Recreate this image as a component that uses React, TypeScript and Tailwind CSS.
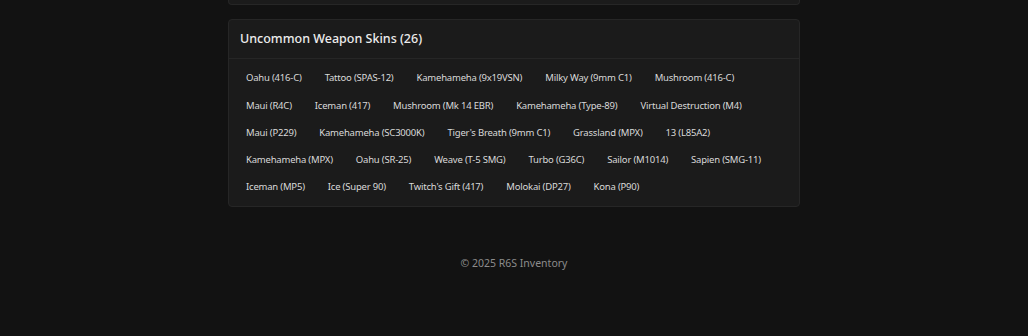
const skins = [
  "Oahu (416-C)",
  "Tattoo (SPAS-12)",
  "Kamehameha (9x19VSN)",
  "Milky Way (9mm C1)",
  "Mushroom (416-C)",
  "Maui (R4C)",
  "Iceman (417)",
  "Mushroom (Mk 14 EBR)",
  "Kamehameha (Type-89)",
  "Virtual Destruction (M4)",
  "Maui (P229)",
  "Kamehameha (SC3000K)",
  "Tiger's Breath (9mm C1)",
  "Grassland (MPX)",
  "13 (L85A2)",
  "Kamehameha (MPX)",
  "Oahu (SR-25)",
  "Weave (T-5 SMG)",
  "Turbo (G36C)",
  "Sailor (M1014)",
  "Sapien (SMG-11)",
  "Iceman (MP5)",
  "Ice (Super 90)",
  "Twitch's Gift (417)",
  "Molokai (DP27)",
  "Kona (P90)",
];

export default function App() {
  return (
    <div className="min-h-[336px] bg-[#121212] font-['Noto_Sans',sans-serif]">
      <main className="mx-auto w-[572px]">
        <div className="h-[5px] rounded-b border-x border-b border-[#262626] bg-[#1b1b1b]" />
        <section className="mt-[14px] rounded border border-[#262626] bg-[#1b1b1b]">
          <div className="flex h-[39px] items-center border-b border-[#262626] px-[11px]">
            <h2 className="text-[12.5px] font-medium text-[#ececec]">Uncommon Weapon Skins (26)</h2>
          </div>
          <div className="flex flex-wrap gap-x-[23px] gap-y-[8.25px] pb-[9px] pl-[17px] pr-3 pt-[10px]">
            {skins.map((s) => (
              <span key={s} className="flex h-[19px] items-center text-[9.5px] tracking-[-0.2px] text-[#d9d9d9]">
                {s}
              </span>
            ))}
          </div>
        </section>
        <footer className="pt-[49px] text-center text-[10.5px] text-[#8c8c8c]">© 2025 R6S Inventory</footer>
      </main>
    </div>
  );
}
